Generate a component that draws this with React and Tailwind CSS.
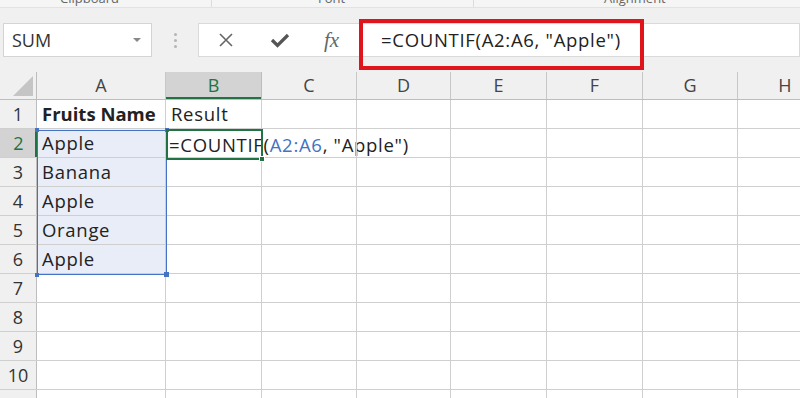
import React from "react";

const cols = [
  { key: "A", w: "w-[129px]" },
  { key: "B", w: "w-[96px]" },
  { key: "C", w: "w-[95px]" },
  { key: "D", w: "w-[94px]" },
  { key: "E", w: "w-[96px]" },
  { key: "F", w: "w-[96px]" },
  { key: "G", w: "w-[95px]" },
  { key: "H", w: "w-[95px]" },
];

const data = {
  1: { A: "Fruits Name", B: "Result" },
  2: { A: "Apple" },
  3: { A: "Banana" },
  4: { A: "Apple" },
  5: { A: "Orange" },
  6: { A: "Apple" },
};

export default function App() {
  const rows = [1, 2, 3, 4, 5, 6, 7, 8, 9, 10, 11];

  return (
    <div
      className="relative w-[800px] h-[398px] overflow-hidden bg-white text-[#222]"
      style={{ fontFamily: "'Open Sans', 'Noto Sans', sans-serif" }}
    >
      {/* ribbon group labels, cut off */}
      <div className="relative h-[8px] bg-[#f5f5f5] border-b border-[#e2e2e2] overflow-hidden text-[13px] text-[#666]">
        <span className="absolute left-[60px] top-[-11px]">Clipboard</span>
        <span className="absolute left-[318px] top-[-11px]">Font</span>
        <span className="absolute left-[604px] top-[-11px]">Alignment</span>
        <div className="absolute left-[211px] top-0 h-full w-px bg-[#dcdcdc]" />
        <div className="absolute left-[473px] top-0 h-full w-px bg-[#dcdcdc]" />
      </div>

      {/* formula bar */}
      <div className="flex items-start h-[64px] bg-[#f0f0f0] pt-[15px]">
        <div className="ml-[3px] w-[149px] h-[34px] bg-white border border-[#d4d4d4] flex items-center justify-between pl-[8px] pr-[10px]">
          <span className="text-[18px] text-[#333]">SUM</span>
          <span className="w-0 h-0 border-l-[4px] border-r-[4px] border-t-[4px] border-l-transparent border-r-transparent border-t-[#888]" />
        </div>
        <div className="w-[46px] h-[34px] flex flex-col items-center justify-center gap-[3px]">
          <span className="w-[3px] h-[3px] rounded-full bg-[#b5b5b5]" />
          <span className="w-[3px] h-[3px] rounded-full bg-[#b5b5b5]" />
          <span className="w-[3px] h-[3px] rounded-full bg-[#b5b5b5]" />
        </div>
        <div className="w-[162px] h-[34px] bg-white border border-r-0 border-[#dadada] flex items-center">
          <svg className="ml-[19px]" width="16" height="16" viewBox="0 0 16 16">
            <path d="M2 2 L14 14 M14 2 L2 14" stroke="#666" strokeWidth="1.6" fill="none" />
          </svg>
          <svg className="ml-[36px]" width="20" height="16" viewBox="0 0 20 16">
            <path d="M2 8 L7.5 13.5 L18 3" stroke="#555" strokeWidth="3.2" fill="none" />
          </svg>
          <span
            className="ml-[34px] text-[21px] italic text-[#666] leading-none"
            style={{ fontFamily: "'Liberation Serif', serif" }}
          >
            fx
          </span>
        </div>
        <div className="flex-1 h-[34px] bg-white border border-[#dadada] flex items-center pl-[20px] text-[18.5px] tracking-[0.7px] text-[#222]">
          =COUNTIF(A2:A6, "Apple")
        </div>
      </div>

      {/* red annotation box */}
      <div className="absolute left-[359px] top-[19px] w-[285px] h-[51px] border-[4px] border-[#e0141b] pointer-events-none" />

      {/* grid */}
      <div className="relative">
        <div className="flex h-[28px] bg-[#f0f0f0] border-b border-[#bdbdbd]">
          <div className="relative w-[37px] shrink-0 border-r border-[#bdbdbd]">
            <svg className="absolute right-[3px] bottom-[3px]" width="20" height="20" viewBox="0 0 20 20">
              <path d="M20 0 L20 20 L0 20 Z" fill="#c5c5c5" />
            </svg>
          </div>
          {cols.map((c) =>
            c.key === "B" ? (
              <div
                key={c.key}
                className={`${c.w} shrink-0 flex items-center justify-center bg-[#d3d3d3] border-r border-[#bdbdbd] shadow-[inset_0_-2px_0_#217346] text-[18px] text-[#217346]`}
              >
                {c.key}
              </div>
            ) : (
              <div
                key={c.key}
                className={`${c.w} shrink-0 flex items-center justify-center border-r border-[#c8c8c8] text-[18px] text-[#444]`}
              >
                {c.key}
              </div>
            )
          )}
        </div>

        {rows.map((r) => (
          <div key={r} className="flex h-[29px] border-b-[1.5px] border-[#cfcfcf]">
            {r === 2 ? (
              <div className="w-[37px] shrink-0 flex items-center justify-center bg-[#d3d3d3] shadow-[inset_-2px_0_0_#217346] text-[18px] text-[#217346]">
                {r}
              </div>
            ) : (
              <div className="w-[37px] shrink-0 flex items-center justify-center bg-[#f0f0f0] border-r border-[#bdbdbd] text-[18px] text-[#333]">
                {r}
              </div>
            )}
            {cols.map((c) => {
              const inRange = c.key === "A" && r >= 2 && r <= 6;
              const val = data[r] && data[r][c.key];
              const bold = r === 1 && c.key === "A";
              return (
                <div
                  key={c.key}
                  className={`${c.w} shrink-0 relative flex items-center pl-[5px] border-r border-[#cfcfcf] text-[18.5px] ${inRange ? "bg-[#e8edf7]" : ""} ${bold ? "font-bold" : "tracking-[0.7px]"}`}
                >
                  {val}
                  {r === 2 && c.key === "B" && (
                    <span className="absolute left-[3px] top-[2px] whitespace-nowrap">
                      =COUNTIF(<span className="text-[#4472c4]">A2:A6</span>, "Apple")
                    </span>
                  )}
                </div>
              );
            })}
          </div>
        ))}

        {/* reference range A2:A6 */}
        <div className="absolute left-[37px] top-[58px] w-[130px] h-[145px] border-[1.5px] border-[#4472c4] pointer-events-none">
          <span className="absolute -left-[3px] -top-[3px] w-[4px] h-[4px] bg-[#4472c4]" />
          <span className="absolute -right-[3px] -top-[3px] w-[4px] h-[4px] bg-[#4472c4]" />
          <span className="absolute -left-[3px] -bottom-[3px] w-[4px] h-[4px] bg-[#4472c4]" />
          <span className="absolute -right-[3px] -bottom-[3px] w-[5px] h-[5px] bg-[#4472c4]" />
        </div>

        {/* active cell B2 */}
        <div className="absolute left-[166px] top-[57px] w-[97px] h-[31px] border-2 border-[#217346] pointer-events-none">
          <span className="absolute -right-[4px] -bottom-[4px] w-[6px] h-[6px] bg-[#217346] border border-white" />
        </div>
      </div>
    </div>
  );
}
